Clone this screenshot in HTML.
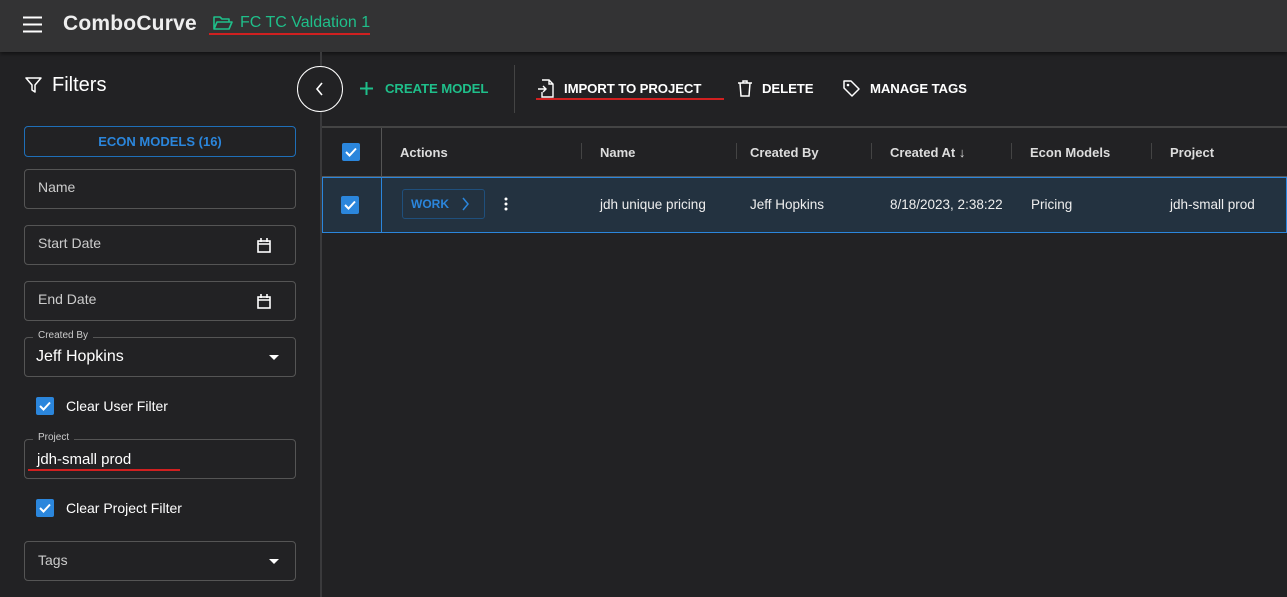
<!DOCTYPE html>
<html><head><style>
*{box-sizing:border-box;margin:0;padding:0}
body{width:1287px;height:597px;overflow:hidden;background:#222224;font-family:"Liberation Sans",sans-serif;color:#fff;position:relative}
.a{position:absolute}
.hdr{left:0;top:0;width:1287px;height:52px;background:#333334;box-shadow:0 2px 4px rgba(0,0,0,.5)}
.field{position:absolute;left:24px;width:272px;height:40px;border:1px solid #555;border-radius:4px}
.ph{position:absolute;left:13px;top:11px;font-size:14px;color:#ccc}
.lbl{position:absolute;left:8px;top:-8px;background:#222224;padding:0 5px;font-size:10px;color:#ccc}
.cb{position:absolute;width:18px;height:18px;background:#2b86dc;border-radius:2px}
.tb{font-size:13.2px;font-weight:bold;letter-spacing:-.1px}
.th{position:absolute;top:145px;font-size:13px;font-weight:bold;color:#ddd}
.td{position:absolute;top:197px;font-size:13.5px;color:#eee}
.sep{position:absolute;top:143px;width:1px;height:16px;background:#444}
</style></head><body>
<div class="a hdr"></div>
<svg class="a" style="left:23px;top:16px" width="19" height="17"><path d="M0 1.5H19M0 8.5H19M0 15.5H19" stroke="#fff" stroke-width="2"/></svg>
<div class="a" style="left:63px;top:12px;font-size:21px;font-weight:bold;color:#eee;letter-spacing:.2px">ComboCurve</div>
<svg class="a" style="left:213px;top:15px" width="20" height="16"><path d="M1 14V2h6l2 2h7v3M1 14l3-7h15l-3 7z" fill="none" stroke="#1fbf8a" stroke-width="1.6" stroke-linejoin="round"/></svg>
<div class="a" style="left:240px;top:14px;font-size:16px;color:#1fbf8a">FC TC Valdation 1</div>
<div class="a" style="left:209px;top:33px;width:161px;height:2px;background:#d02020"></div>

<svg class="a" style="left:25px;top:77px" width="17" height="17"><path d="M1 1h15l-6 7v7l-3-2v-5z" fill="none" stroke="#fff" stroke-width="1.5" stroke-linejoin="round"/></svg>
<div class="a" style="left:52px;top:74px;font-size:20px">Filters</div>
<div class="a" style="left:24px;top:126px;width:272px;height:31px;border:1px solid #1f6fb8;border-radius:4px;text-align:center;line-height:29px;font-size:13px;font-weight:bold;color:#2b86dc">ECON MODELS (16)</div>
<div class="field" style="top:169px"><span class="ph" style="top:9px">Name</span></div>
<div class="field" style="top:225px"><span class="ph" style="top:9px">Start Date</span><svg class="a" style="left:232px;top:12px" width="14" height="16"><rect x="1" y="3" width="12" height="11" fill="none" stroke="#fff" stroke-width="1.6"/><path d="M1 6h12M4 0v4M10 0v4" stroke="#fff" stroke-width="1.6"/></svg></div>
<div class="field" style="top:281px"><span class="ph" style="top:9px">End Date</span><svg class="a" style="left:232px;top:12px" width="14" height="16"><rect x="1" y="3" width="12" height="11" fill="none" stroke="#fff" stroke-width="1.6"/><path d="M1 6h12M4 0v4M10 0v4" stroke="#fff" stroke-width="1.6"/></svg></div>
<div class="field" style="top:337px"><span class="lbl">Created By</span><span class="a" style="left:11px;top:10px;font-size:16px">Jeff Hopkins</span><svg class="a" style="left:244px;top:17px" width="10" height="5"><path d="M0 0h10L5 5z" fill="#fff"/></svg></div>
<div class="cb" style="left:36px;top:397px"></div><svg class="a" style="left:36px;top:397px" width="18" height="18"><path d="M4 9l3.5 3.5L14 5.5" stroke="#fff" stroke-width="2" fill="none"/></svg>
<div class="a" style="left:66px;top:398px;font-size:14px">Clear User Filter</div>
<div class="field" style="top:439px"><span class="lbl">Project</span><span class="a" style="left:12px;top:11px;font-size:15px">jdh-small prod</span></div>
<div class="a" style="left:28px;top:469px;width:152px;height:2px;background:#d02020"></div>
<div class="cb" style="left:36px;top:499px"></div><svg class="a" style="left:36px;top:499px" width="18" height="18"><path d="M4 9l3.5 3.5L14 5.5" stroke="#fff" stroke-width="2" fill="none"/></svg>
<div class="a" style="left:66px;top:500px;font-size:14px">Clear Project Filter</div>
<div class="field" style="top:541px"><span class="ph" style="top:10px">Tags</span><svg class="a" style="left:244px;top:17px" width="10" height="5"><path d="M0 0h10L5 5z" fill="#fff"/></svg></div>

<div class="a" style="left:320px;top:52px;width:2px;height:545px;background:#3a3a3c"></div>
<div class="a" style="left:297px;top:66px;width:46px;height:46px;border:1.5px solid #fff;border-radius:50%;background:#222224"></div>
<svg class="a" style="left:315px;top:82px" width="10" height="14"><path d="M7 1L2 7l5 6" stroke="#fff" stroke-width="1.6" fill="none"/></svg>
<svg class="a" style="left:360px;top:82px" width="13" height="13"><path d="M6.5 0v13M0 6.5h13" stroke="#1fbf8a" stroke-width="2"/></svg>
<div class="a tb" style="left:385px;top:81px;color:#1fbf8a">CREATE MODEL</div>
<div class="a" style="left:514px;top:65px;width:1px;height:48px;background:#444"></div>
<svg class="a" style="left:537px;top:79px" width="18" height="19"><path d="M5 1h7l4 4v13H5v-5M12 1v4h4M1 10h8M6 7l3 3-3 3" stroke="#fff" stroke-width="1.4" fill="none"/></svg>
<div class="a tb" style="left:564px;top:81px">IMPORT TO PROJECT</div>
<div class="a" style="left:536px;top:98px;width:188px;height:2px;background:#d02020"></div>
<svg class="a" style="left:738px;top:80px" width="14" height="17"><path d="M0 3h14M5 3V1h4v2M2 3l1 13h8l1-13" stroke="#fff" stroke-width="1.5" fill="none"/></svg>
<div class="a tb" style="left:762px;top:81px">DELETE</div>
<svg class="a" style="left:843px;top:80px" width="17" height="17"><path d="M1 1h7l8 8-7 7-8-8z" stroke="#fff" stroke-width="1.5" fill="none" stroke-linejoin="round"/><circle cx="5" cy="5" r="1.3" fill="#fff"/></svg>
<div class="a tb" style="left:870px;top:81px">MANAGE TAGS</div>

<div class="a" style="left:322px;top:126px;width:965px;height:2px;background:#444"></div>
<div class="a" style="left:381px;top:128px;width:1px;height:105px;background:#555"></div>
<div class="a" style="left:322px;top:176px;width:965px;height:1px;background:#555"></div>
<div class="a" style="left:322px;top:177px;width:965px;height:56px;background:#233240;border:1px solid #2b86dc"></div>
<div class="a" style="left:381px;top:177px;width:1px;height:56px;background:#2b86dc"></div>
<div class="cb" style="left:342px;top:143px"></div><svg class="a" style="left:342px;top:143px" width="18" height="18"><path d="M4 9l3.5 3.5L14 5.5" stroke="#fff" stroke-width="2" fill="none"/></svg>
<div class="cb" style="left:341px;top:196px"></div><svg class="a" style="left:341px;top:196px" width="18" height="18"><path d="M4 9l3.5 3.5L14 5.5" stroke="#fff" stroke-width="2" fill="none"/></svg>
<div class="th" style="left:400px">Actions</div>
<div class="sep" style="left:581px"></div><div class="th" style="left:600px">Name</div>
<div class="sep" style="left:736px"></div><div class="th" style="left:750px">Created By</div>
<div class="sep" style="left:871px"></div><div class="th" style="left:890px">Created At ↓</div>
<div class="sep" style="left:1011px"></div><div class="th" style="left:1030px">Econ Models</div>
<div class="sep" style="left:1151px"></div><div class="th" style="left:1170px">Project</div>
<div class="a" style="left:402px;top:189px;width:83px;height:30px;border:1px solid #1f4f7c;border-radius:3px"></div>
<div class="a" style="left:411px;top:197px;font-size:12px;font-weight:bold;color:#2b86dc">WORK</div>
<svg class="a" style="left:462px;top:197px" width="8" height="14"><path d="M1 1l5 6-5 6" stroke="#2b86dc" stroke-width="1.5" fill="none"/></svg>
<svg class="a" style="left:504px;top:197px" width="4" height="14"><circle cx="2" cy="2" r="1.5" fill="#fff"/><circle cx="2" cy="7" r="1.5" fill="#fff"/><circle cx="2" cy="12" r="1.5" fill="#fff"/></svg>
<div class="td" style="left:600px">jdh unique pricing</div>
<div class="td" style="left:750px">Jeff Hopkins</div>
<div class="td" style="left:890px">8/18/2023, 2:38:22</div>
<div class="td" style="left:1031px">Pricing</div>
<div class="td" style="left:1170px">jdh-small prod</div>
</body></html>
